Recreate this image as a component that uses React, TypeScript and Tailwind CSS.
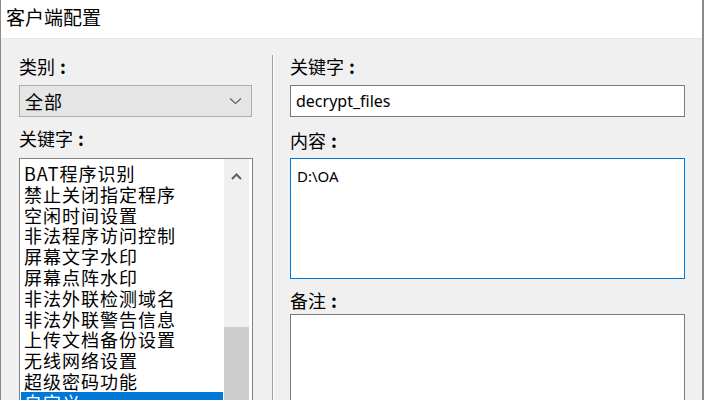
const items = [
  "BAT程序识别",
  "禁止关闭指定程序",
  "空闲时间设置",
  "非法程序访问控制",
  "屏幕文字水印",
  "屏幕点阵水印",
  "非法外联检测域名",
  "非法外联警告信息",
  "上传文档备份设置",
  "无线网络设置",
  "超级密码功能",
  "自定义",
];

const cjk = "font-['Microsoft_YaHei','Noto_Sans_CJK_SC',sans-serif]";
const latin = "font-['Segoe_UI','Noto_Sans','Noto_Sans_CJK_SC',sans-serif]";

function Label({ text }: { text: string }) {
  return (
    <div className={`${cjk} h-[22px] shrink-0 text-[18px] leading-[22px] text-black`}>
      {text}
      <span className="ml-[5px] font-bold">:</span>
    </div>
  );
}

export default function App() {
  return (
    <div className="w-[711px] h-[400px] overflow-hidden flex bg-white">
      <div className="w-[704px] h-full flex flex-col border-l border-r-2 border-[#8a8a8a]">
        {/* title */}
        <div className={`${cjk} h-[38px] shrink-0 bg-white pl-[5px] pt-[5px] text-[19px] leading-[24px] text-black`}>
          客户端配置
        </div>

        {/* body */}
        <div className="flex-1 flex bg-[#f0f0f0] border-t border-[#e8e8e8] pt-[16px] overflow-hidden">
          {/* left column */}
          <div className="w-[271px] shrink-0 pl-[18px] flex flex-col">
            <Label text="类别" />
            <div className="mt-[8px] shrink-0 w-[233px] h-[32px] bg-[#e5e5e5] border border-[#adadad] flex items-center justify-between pl-[5px] pr-[9px]">
              <span className={`${cjk} text-[18px] leading-[22px] tracking-[1px] text-black`}>全部</span>
              <svg width="13" height="8" viewBox="0 0 13 8">
                <path d="M1 1.5 L6.5 6.5 L12 1.5" fill="none" stroke="#606060" strokeWidth="1.2" />
              </svg>
            </div>

            <div className="mt-[10px] shrink-0">
              <Label text="关键字" />
            </div>
            <div className="mt-[9px] shrink-0 w-[234px] h-[260px] bg-white border border-[#828282] flex">
              <div className={`${cjk} flex-1 pt-[4px] text-[18px] leading-[20.8px] tracking-[1px] text-black`}>
                {items.map((it, i) =>
                  i === items.length - 1 ? (
                    <div key={i} className="mx-[1px] pl-[3px] bg-[#0078d7] text-white">
                      {it}
                    </div>
                  ) : (
                    <div key={i} className="pl-[4px] whitespace-nowrap">
                      {it}
                    </div>
                  )
                )}
              </div>
              <div className="w-[28px] shrink-0 flex">
                <div className="w-[25px] bg-[#f0f0f0] flex flex-col">
                  <div className="h-[34px] shrink-0 flex items-center justify-center">
                    <svg width="11" height="7" viewBox="0 0 11 7">
                      <path d="M1 6 L5.5 1.5 L10 6" fill="none" stroke="#606060" strokeWidth="2" />
                    </svg>
                  </div>
                  <div className="mt-[134px] flex-1 bg-[#cdcdcd]" />
                </div>
              </div>
            </div>
          </div>

          {/* separator */}
          <div className="w-[2px] shrink-0 border-l border-[#a0a0a0] border-r border-r-white" />

          {/* right column */}
          <div className="flex-1 pl-[16px] flex flex-col">
            <Label text="关键字" />
            <div className={`${latin} mt-[8px] shrink-0 w-[395px] h-[32px] bg-white border border-[#7a7a7a] flex items-center pl-[5px] text-[16px] text-black`}>
              decrypt_files
            </div>

            <div className="mt-[12px] shrink-0">
              <Label text="内容" />
            </div>
            <div className={`${latin} mt-[7px] shrink-0 w-[395px] h-[121px] bg-white border border-[#0078d7] pl-[6px] pt-[7px] text-[15px] leading-[20px] text-black`}>
              D:\OA
            </div>

            <div className="mt-[10px] shrink-0">
              <Label text="备注" />
            </div>
            <div className="mt-[3px] shrink-0 w-[395px] h-[120px] bg-white border border-[#7a7a7a]" />
          </div>
        </div>
      </div>
    </div>
  );
}
